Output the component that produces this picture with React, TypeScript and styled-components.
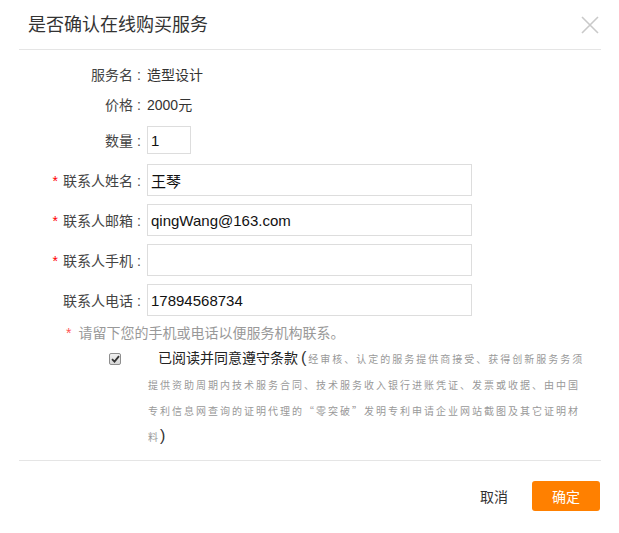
import React from "react";
import styled, { createGlobalStyle } from "styled-components";

const Global = createGlobalStyle`
  html, body { margin: 0; padding: 0; background: #fff; }
  body {
    font-family: "Liberation Sans", "Noto Sans CJK SC", sans-serif;
    font-size: 14px;
    color: #333;
  }
  * { box-sizing: border-box; }
`;

const Dialog = styled.div`
  width: 619px;
  height: 533px;
  padding: 0 18px 0 19px;
  background: #fff;
`;

const Header = styled.div`
  height: 50px;
  border-bottom: 1px solid #e5e5e5;
  display: flex;
  align-items: center;
  justify-content: space-between;
`;

const Title = styled.h1`
  margin: 0;
  padding-left: 9px;
  font-size: 18px;
  font-weight: normal;
  color: #333;
  line-height: 24px;
`;

const Close = styled.button`
  width: 18px;
  height: 18px;
  margin-right: 2px;
  padding: 0;
  border: 0;
  background: none;
  display: flex;
`;

const Body = styled.div`
  border-bottom: 1px solid #e5e5e5;
  padding-bottom: 11px;
`;

const Row = styled.div<{ $top: number; $h: number }>`
  display: flex;
  align-items: center;
  margin-top: ${(p) => p.$top}px;
  height: ${(p) => p.$h}px;
`;

const Label = styled.label`
  width: 128px;
  text-align: right;
  font-size: 14px;
  color: #444;
  white-space: nowrap;
`;

const Colon = styled.span`
  display: inline-block;
  width: 14px;
  text-align: center;
  padding-right: 2px;
`;

const Star = styled.span`
  color: #f00;
  margin-right: 5px;
`;

const Value = styled.span`
  font-size: 14px;
  color: #333;
`;

const Input = styled.input<{ $w: number; $h: number }>`
  width: ${(p) => p.$w}px;
  height: ${(p) => p.$h}px;
  border: 1px solid #ddd;
  padding: 0 3px;
  font-family: "Liberation Sans", "Noto Sans CJK SC", sans-serif;
  font-size: 15px;
  color: #111;
  outline: none;
  background: #fff;
`;

const Hint = styled.div`
  margin-top: 7px;
  height: 20px;
  line-height: 20px;
  padding-left: 47px;
  color: #999;
  font-size: 14px;
`;

const HintStar = styled.span`
  color: #f55;
  margin-right: 7px;
`;

const Terms = styled.div`
  margin-top: 2px;
  display: flex;
  align-items: flex-start;
  padding-left: 90px;
`;

const CheckCell = styled.div`
  width: 39px;
  height: 26px;
  display: flex;
  align-items: center;
  padding-top: 1px;
`;

const CheckBox = styled.span`
  width: 12px;
  height: 12px;
  border: 1px solid #8e8e8e;
  border-radius: 2px;
  background: linear-gradient(#f0f0f0, #d8d8d8);
  display: flex;
  align-items: center;
  justify-content: center;
`;

const TermsText = styled.div`
  width: 437px;
  line-height: 26px;
`;

const Agree = styled.span`
  padding-left: 10px;
  font-size: 14px;
  line-height: 1;
  color: #222;
`;

const Paren = styled.span<{ $open?: boolean }>`
  font-size: 16px;
  line-height: 1;
  color: #333;
  margin: ${(p) => (p.$open ? "0 2px 0 3px" : "0")};
`;

const Fine = styled.span`
  font-family: "Noto Sans CJK SC", sans-serif;
  font-size: 10px;
  line-height: 1;
  letter-spacing: 2px;
  color: #999;
`;

const Footer = styled.div`
  display: flex;
  justify-content: flex-end;
  align-items: center;
  padding-top: 20px;
  padding-right: 1px;
  gap: 24px;
`;

const Cancel = styled.button`
  border: 0;
  background: none;
  padding: 0;
  font-family: inherit;
  font-size: 14px;
  color: #333;
`;

const Confirm = styled.button`
  width: 68px;
  height: 30px;
  border: 0;
  border-radius: 3px;
  background: #ff8000;
  color: #fff;
  font-family: inherit;
  font-size: 14px;
`;

type FieldProps = { label: string; required?: boolean };

const FieldLabel = ({ label, required }: FieldProps) => (
  <Label>
    {required && <Star>*</Star>}
    {label}
    <Colon>:</Colon>
  </Label>
);

export default function App() {
  return (
    <>
      <Global />
      <Dialog>
        <Header>
          <Title>是否确认在线购买服务</Title>
          <Close aria-label="close">
            <svg width="18" height="18" viewBox="0 0 18 18">
              <path d="M1 1 L17 17 M17 1 L1 17" stroke="#c9c9c9" strokeWidth="1.6" fill="none" />
            </svg>
          </Close>
        </Header>
        <Body>
          <Row $top={10} $h={28}>
            <FieldLabel label="服务名" />
            <Value>造型设计</Value>
          </Row>
          <Row $top={2} $h={28}>
            <FieldLabel label="价格" />
            <Value>2000元</Value>
          </Row>
          <Row $top={8} $h={28}>
            <FieldLabel label="数量" />
            <Input $w={44} $h={28} defaultValue="1" />
          </Row>
          <Row $top={10} $h={32}>
            <FieldLabel label="联系人姓名" required />
            <Input $w={325} $h={32} defaultValue="王琴" />
          </Row>
          <Row $top={8} $h={32}>
            <FieldLabel label="联系人邮箱" required />
            <Input $w={325} $h={32} defaultValue="qingWang@163.com" />
          </Row>
          <Row $top={8} $h={32}>
            <FieldLabel label="联系人手机" required />
            <Input $w={325} $h={32} defaultValue="" />
          </Row>
          <Row $top={8} $h={32}>
            <FieldLabel label="联系人电话" />
            <Input $w={325} $h={32} defaultValue="17894568734" />
          </Row>
          <Hint>
            <HintStar>*</HintStar>请留下您的手机或电话以便服务机构联系。
          </Hint>
          <Terms>
            <CheckCell>
              <CheckBox>
                <svg width="9" height="8" viewBox="0 0 9 8">
                  <path d="M1 4.2 L3.5 6.6 L8 1.2" stroke="#333" strokeWidth="1.8" fill="none" />
                </svg>
              </CheckBox>
            </CheckCell>
            <TermsText>
              <Agree>已阅读并同意遵守条款</Agree>
              <Paren $open>(</Paren>
              <Fine>
                经审核、认定的服务提供商接受、获得创新服务务须提供资助周期内技术服务合同、技术服务收入银行进账凭证、发票或收据、由中国专利信息网查询的证明代理的“零突破”发明专利申请企业网站截图及其它证明材料
              </Fine>
              <Paren>)</Paren>
            </TermsText>
          </Terms>
        </Body>
        <Footer>
          <Cancel>取消</Cancel>
          <Confirm>确定</Confirm>
        </Footer>
      </Dialog>
    </>
  );
}
